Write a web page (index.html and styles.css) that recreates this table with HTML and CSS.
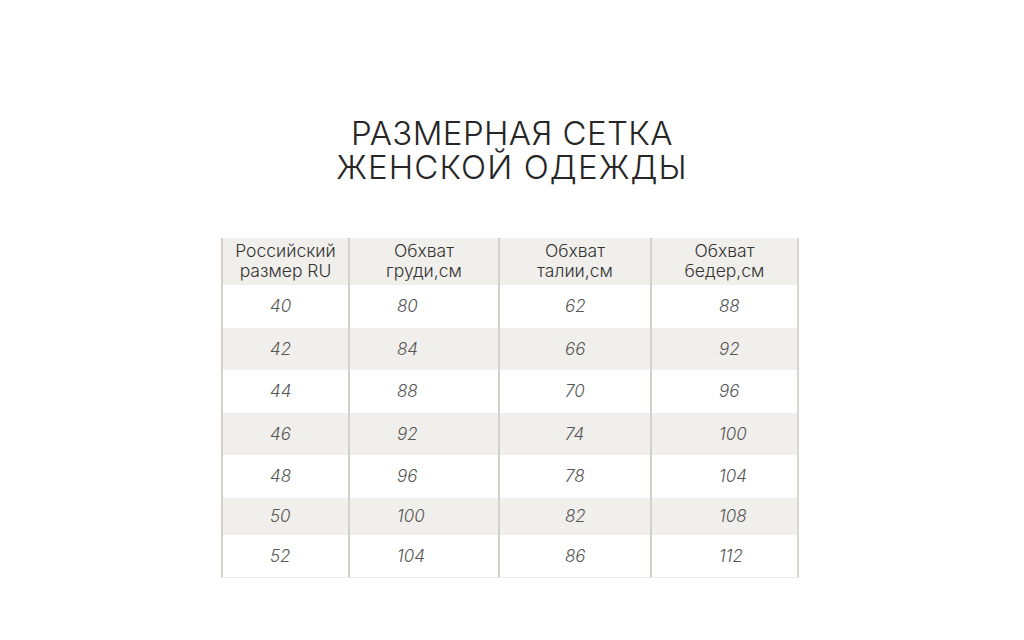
FILE: index.html
```html
<!DOCTYPE html>
<html lang="ru">
<head>
<meta charset="utf-8">
<title>Размерная сетка</title>
<link rel="stylesheet" href="styles.css">
</head>
<body>
<main class="page">
  <h1 class="title"><span class="line">РАЗМЕРНАЯ СЕТКА</span><span class="line wide">ЖЕНСКОЙ ОДЕЖДЫ</span></h1>
  <div class="sizes">
    <div class="row head">
      <div class="cell">Российский<br>размер RU</div>
      <div class="cell">Обхват<br>груди,см</div>
      <div class="cell">Обхват<br>талии,см</div>
      <div class="cell">Обхват<br>бедер,см</div>
    </div>
    <div class="row"><div class="cell n1">40</div><div class="cell n2">80</div><div class="cell n3">62</div><div class="cell n4">88</div></div>
    <div class="row alt"><div class="cell n1">42</div><div class="cell n2">84</div><div class="cell n3">66</div><div class="cell n4">92</div></div>
    <div class="row"><div class="cell n1">44</div><div class="cell n2">88</div><div class="cell n3">70</div><div class="cell n4">96</div></div>
    <div class="row alt"><div class="cell n1">46</div><div class="cell n2">92</div><div class="cell n3">74</div><div class="cell n4">100</div></div>
    <div class="row"><div class="cell n1">48</div><div class="cell n2">96</div><div class="cell n3">78</div><div class="cell n4">104</div></div>
    <div class="row alt short"><div class="cell n1">50</div><div class="cell n2">100</div><div class="cell n3">82</div><div class="cell n4">108</div></div>
    <div class="row last"><div class="cell n1">52</div><div class="cell n2">104</div><div class="cell n3">86</div><div class="cell n4">112</div></div>
  </div>
</main>
</body>
</html>
```

FILE: styles.css
```css
html, body {
  margin: 0;
  padding: 0;
  background: #ffffff;
}

.page {
  width: 1024px;
  height: 640px;
  display: flex;
  flex-direction: column;
  align-items: center;
  box-sizing: border-box;
  padding-top: 116px;
  font-family: Inter, "Noto Sans", sans-serif;
  color: #2b2b2b;
}

.title {
  margin: 0 0 54px 0;
  font-family: Inter, "Noto Sans", sans-serif;
  font-weight: 300;
  font-size: 33px;
  letter-spacing: 0.4px;
  text-align: center;
  color: #262626;
  display: flex;
  flex-direction: column;
  align-items: center;
}

.line {
  display: block;
  line-height: 34px;
  height: 34px;
}

.line.wide {
  letter-spacing: 1.1px;
}

.sizes {
  width: 578px;
  margin-right: 4px;
  border-bottom: 1px solid #ebe9e5;
}

.row {
  display: grid;
  grid-template-columns: 127px 150px 152px 149px;
  height: 42.5px;
}

.row.alt,
.row.head {
  background: #f1efeb;
}

.row.head {
  height: 47px;
}

.row.short {
  height: 37px;
}

.row.last {
  height: 42px;
}

.cell {
  border-left: 2px solid #d3cfca;
  display: flex;
  align-items: center;
  justify-content: center;
  font-size: 17px;
  color: #4a4a4a;
}

.cell:last-child {
  border-right: 2px solid #d9d6d2;
}

.head .cell {
  flex-direction: column;
  text-align: center;
  font-size: 17.5px;
  line-height: 20px;
  color: #333333;
  font-weight: 350;
  padding-bottom: 2px;
}

.n1, .n2, .n3, .n4 {
  font-style: italic;
  font-weight: 300;
  justify-content: flex-start;
  color: #555555;
}

.n1 { padding-left: 47px; }
.n2 { padding-left: 47px; }
.n3 { padding-left: 65px; }
.n4 { padding-left: 67px; }
```
